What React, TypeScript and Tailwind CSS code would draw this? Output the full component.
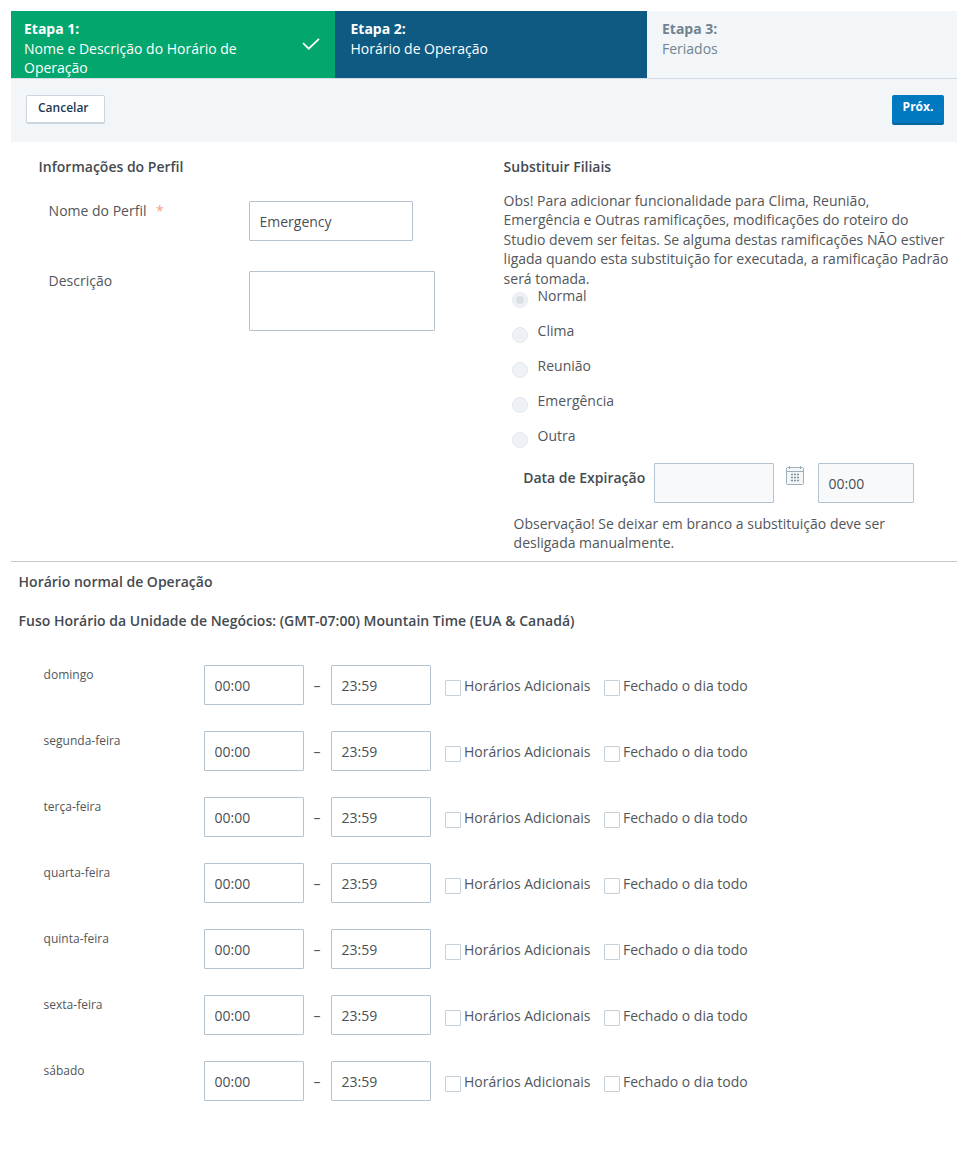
import React from "react";

const days = ["domingo", "segunda-feira", "terça-feira", "quarta-feira", "quinta-feira", "sexta-feira", "sábado"];
const branches = ["Normal", "Clima", "Reunião", "Emergência", "Outra"];

function Step({ title, text, className, check }: { title: string; text: string; className: string; check?: boolean }) {
  return (
    <div className={`flex items-start h-[67px] pt-[8px] ${className}`}>
      <div className="flex-1">
        <div className="font-bold leading-[20px]">{title}</div>
        <div className="leading-[19.2px]">{text}</div>
      </div>
      {check && (
        <svg width="18" height="14" viewBox="0 0 18 14" className="mt-[19px] mr-[15px] ml-[10px]" fill="none" stroke="white" strokeWidth="1.7">
          <path d="M1 5 L6.7 10.7 L17 0.8" />
        </svg>
      )}
    </div>
  );
}

function TextBox({ value, className }: { value?: string; className: string }) {
  return (
    <div className={`h-[40px] border border-[#b4c3cf] rounded-[1px] pl-[9.5px] pt-[10px] leading-[20px] text-[#4a4f55] ${className}`}>
      {value}
    </div>
  );
}

export default function App() {
  return (
    <div className="w-[961px] h-[1152px] bg-white pt-[11px] pl-[11px] pr-[4px] text-[14px] text-[#53565a]" style={{ fontFamily: '"Open Sans", sans-serif' }}>
      {/* wizard steps */}
      <div className="flex border-b border-[#d3dbe6] bg-[#f2f6f9]">
        <Step title="Etapa 1:" text="Nome e Descrição do Horário de Operação" className="w-[324px] bg-[#03a66d] text-white pl-[13px]" check />
        <Step title="Etapa 2:" text="Horário de Operação" className="w-[312px] bg-[#0e5a83] text-white pl-[15.5px]" />
        <Step title="Etapa 3:" text="Feriados" className="flex-1 text-[#71838f] pl-[15px]" />
      </div>
      <div className="flex justify-between items-start h-[63px] bg-[#f2f6f9] pt-[16px] pl-[15px] pr-[13px]">
        <button className="w-[79px] h-[29px] bg-white border border-[#ccd5e0] border-b-2 rounded-[2px] text-[12px] text-left pl-[11px] font-semibold text-[#1d3a52] pb-[3px]">Cancelar</button>
        <button className="w-[52px] h-[30px] bg-[#0079c0] border-b-2 border-[#0a659c] rounded-[2px] text-[12px] font-bold text-white pb-[4px]">Próx.</button>
      </div>

      {/* profile and branches */}
      <div className="flex h-[420px] border-b border-[#c4c9cd]">
        <div className="w-[492.6px] pl-[27.6px] pt-[15px]">
          <div className="font-semibold leading-[20px] text-[#444a50]">Informações do Perfil</div>
          <div className="flex mt-[24px] pl-[10px]">
            <div className="w-[200.4px] leading-[20px]">Nome do Perfil <span className="text-[#f5a27a] ml-[6px]">*</span></div>
            <TextBox value="Emergency" className="w-[164px]" />
          </div>
          <div className="flex mt-[30px] pl-[10px]">
            <div className="w-[200.4px] leading-[20px]">Descrição</div>
            <TextBox className="w-[186px] !h-[60px]" />
          </div>
        </div>
        <div className="flex-1 pt-[15px]">
          <div className="font-semibold leading-[20px] text-[#444a50]">Substituir Filiais</div>
          <p className="mt-[13.6px] leading-[19.5px] w-[445.5px] h-[98.4px]">
            Obs! Para adicionar funcionalidade para Clima, Reunião, Emergência e Outras ramificações, modificações do roteiro do Studio devem ser feitas. Se alguma destas ramificações NÃO estiver ligada quando esta substituição for executada, a ramificação Padrão será tomada.
          </p>
          <div className="flex flex-col gap-[15px] -mt-[3px] pl-[8.4px]">
            {branches.map((b, i) => (
              <div key={b} className="flex h-[20px] leading-[20px]">
                <div className="w-[16px] h-[16px] mt-[6px] rounded-full bg-[#eef2f6] border border-[#e4e9ee] flex items-center justify-center">
                  {i === 0 && <div className="w-[8px] h-[8px] rounded-full bg-[#d9dfe5]" />}
                </div>
                <span className="ml-[9.6px]">{b}</span>
              </div>
            ))}
          </div>
          <div className="flex items-start mt-[17px] pl-[19.6px]">
            <div className="w-[130.8px] pt-[5px] font-semibold leading-[20px] text-[#444a50]">Data de Expiração</div>
            <TextBox className="w-[120px] bg-[#f8f9fa]" />
            <svg width="18" height="20" viewBox="0 0 18 20" className="ml-[12px] mr-[14px] mt-[3px]" fill="#f4f7f9" stroke="#9fafb9" strokeWidth="1">
              <rect x="0.5" y="1.5" width="17" height="17" rx="1" />
              <path d="M0.5 5.5 H17.5" />
              <path d="M3.5 0 V3 M14.5 0 V3" />
              <path d="M5 8.5h2M8 8.5h2M11 8.5h2M5 11.5h2M8 11.5h2M11 11.5h2M5 14.5h2M8 14.5h2M11 14.5h2" stroke="#7f909b" strokeWidth="1.4" />
            </svg>
            <TextBox value="00:00" className="w-[96px] bg-[#f8f9fa]" />
          </div>
          <p className="mt-[11px] ml-[10px] w-[420px] leading-[19.5px]">
            Observação! Se deixar em branco a substituição deve ser desligada manualmente.
          </p>
        </div>
      </div>

      {/* regular hours */}
      <div className="pl-[7.6px] font-semibold text-[#444a50] leading-[20px] mt-[10px]">Horário normal de Operação</div>
      <div className="pl-[7.6px] font-semibold text-[#444a50] leading-[20px] mt-[19px]">Fuso Horário da Unidade de Negócios: (GMT-07:00) Mountain Time (EUA &amp; Canadá)</div>
      <div className="flex flex-col gap-[26px] mt-[34px]">
        {days.map((d) => (
          <div key={d} className="flex items-start h-[40px]">
            <div className="w-[193px] pl-[32.6px] pt-[1px] text-[12px] leading-[18px]">{d}</div>
            <TextBox value="00:00" className="w-[100px]" />
            <div className="w-[27px] text-center leading-[20px] pt-[11px] pr-[1px]">–</div>
            <TextBox value="23:59" className="w-[100px]" />
            <div className="w-[16px] h-[16px] ml-[14px] mt-[15px] border border-[#c6d0d8] rounded-[1px]" />
            <span className="ml-[3px] pt-[11px] leading-[20px] w-[140px]">Horários Adicionais</span>
            <div className="w-[16px] h-[16px] mt-[15px] border border-[#c6d0d8] rounded-[1px]" />
            <span className="ml-[3px] pt-[11px] leading-[20px]">Fechado o dia todo</span>
          </div>
        ))}
      </div>
    </div>
  );
}
